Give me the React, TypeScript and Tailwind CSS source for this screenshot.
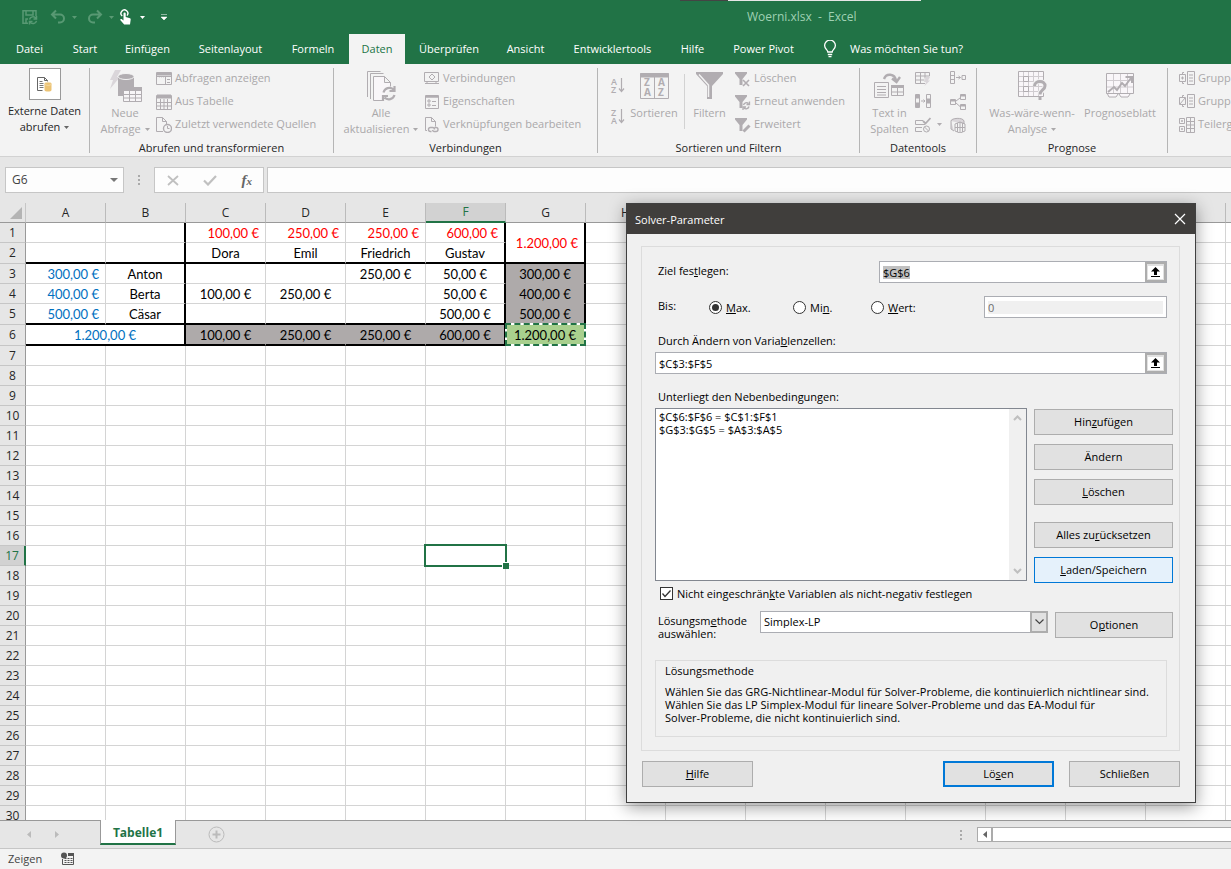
import type { ReactNode } from "react";
import clsx from "clsx";

const tabs = [
    { label: "Datei", width: "w-[59px]" },
    { label: "Start", width: "w-[52px]" },
    { label: "Einfügen", width: "w-[73px]" },
    { label: "Seitenlayout", width: "w-[93px]" },
    { label: "Formeln", width: "w-[72px]" },
    { label: "Daten", width: "w-[56px]", active: true },
    { label: "Überprüfen", width: "w-[88px]" },
    { label: "Ansicht", width: "w-[65px]" },
    { label: "Entwicklertools", width: "w-[109px]" },
    { label: "Hilfe", width: "w-[51px]" },
    { label: "Power Pivot", width: "w-[91px]" },
];

const columns = ["A", "B", "C", "D", "E", "F", "G", "H", "I", "J", "K", "L", "M", "N", "O", "P"];

type Cell = { text: string; style: string };

const red = "text-right pr-[6px] text-[#ff0000]";
const blue = "text-right pr-[6px] text-[#0070c0]";
const mid = "text-center text-black";
const gray = "text-center text-black bg-[#aeaaaa]";

const cells: Record<string, Cell> = {
    C1: { text: "100,00 €", style: red },
    D1: { text: "250,00 €", style: red },
    E1: { text: "250,00 €", style: red },
    F1: { text: "600,00 €", style: red },
    G1: { text: "1.200,00 €", style: red },
    C2: { text: "Dora", style: mid },
    D2: { text: "Emil", style: mid },
    E2: { text: "Friedrich", style: mid },
    F2: { text: "Gustav", style: mid },
    A3: { text: "300,00 €", style: blue },
    B3: { text: "Anton", style: mid },
    E3: { text: "250,00 €", style: mid },
    F3: { text: "50,00 €", style: mid },
    G3: { text: "300,00 €", style: gray },
    A4: { text: "400,00 €", style: blue },
    B4: { text: "Berta", style: mid },
    C4: { text: "100,00 €", style: mid },
    D4: { text: "250,00 €", style: mid },
    F4: { text: "50,00 €", style: mid },
    G4: { text: "400,00 €", style: gray },
    A5: { text: "500,00 €", style: blue },
    B5: { text: "Cäsar", style: mid },
    F5: { text: "500,00 €", style: mid },
    G5: { text: "500,00 €", style: gray },
    A6: { text: "1.200,00 €", style: "text-center text-[#0070c0]" },
    C6: { text: "100,00 €", style: gray },
    D6: { text: "250,00 €", style: gray },
    E6: { text: "250,00 €", style: gray },
    F6: { text: "600,00 €", style: gray },
    G6: { text: "1.200,00 €", style: "text-center text-black bg-[#a9d08e]" },
};

/* ---------- icons ---------- */

const Svg = ({ w = 16, h = 16, children, className }: { w?: number; h?: number; children: ReactNode; className?: string }) => (
    <svg width={w} height={h} viewBox={`0 0 ${w} ${h}`} fill="none" stroke="#b1adb1" className={clsx("shrink-0", className)} aria-hidden="true">
        {children}
    </svg>
);

const Caret = ({ className = "text-[#b1adb1]" }: { className?: string }) => (
    <svg width="5" height="3" viewBox="0 0 5 3" className={clsx("inline-block shrink-0", className)} aria-hidden="true">
        <path d="M0 0h5L2.5 3z" fill="currentColor" />
    </svg>
);

const SaveIcon = () => (
    <Svg className="opacity-50">
        <g stroke="#8fbfa1" strokeWidth="1.5">
            <path d="M6 14.2H1V1.8h13V7M4 2v4h7V2M4 14v-4h2" />
            <path d="M7.5 10.5a3.6 3.6 0 0 1 6.4-1.2M14.5 7v3h-3M14.5 11.8a3.6 3.6 0 0 1-6.4 1.3M7.5 15.5v-3h3" />
        </g>
    </Svg>
);

const UndoIcon = ({ flip }: { flip?: boolean }) => (
    <Svg className={clsx("opacity-50", flip && "-scale-x-100")}>
        <path d="M6 1.5 2 5.5l4 4M2.5 5.5H10a4 4 0 0 1 0 8H8" stroke="#8fbfa1" strokeWidth="2" />
    </Svg>
);

const TouchIcon = () => (
    <Svg w={14}>
        <path d="M4.2 7A3.4 3.4 0 1 1 9 6.6" stroke="#fff" strokeWidth="1.4" />
        <path d="M5.5 4.5a1.1 1.1 0 0 1 2.2 0V8l4.3 1.2c.6.2.8.6.7 1.3L12 15.6H6.2L2 10.8c.6-.9 1.4-.9 2.2-.3l1.3.9z" fill="#fff" stroke="none" />
    </Svg>
);

const BulbIcon = () => (
    <Svg w={14} h={18}>
        <path d="M4.8 12c0-2-3.2-3-3.2-6.4a5.4 5.4 0 0 1 10.8 0C12.4 9 9.2 10 9.2 12zM4.8 14.5h4.4M5.5 16.6h3" stroke="#fff" strokeWidth="1.3" />
    </Svg>
);

const ExternalIcon = () => (
    <Svg w={15} h={15}>
        <path d="M5.5 13.5h-5V.5h7l3 3v1M7.5.5v3h3" stroke="#666" />
        <path d="M2.5 4.5h3M2.5 6.5h4M2.5 8.5h4M2.5 10.5h4" stroke="#777" />
        <path d="M7.5 7v6c0 2 7 2 7 0V7z" fill="#ecc374" stroke="none" />
        <ellipse cx="11" cy="6.8" rx="3.5" ry="1.6" fill="#ecc374" stroke="#f7e4bc" strokeWidth=".6" />
    </Svg>
);

const NewQueryIcon = () => (
    <Svg w={33} h={34}>
        <path d="M6 1h6L8 8h3L1 20l3-9H1z" fill="#dad6da" stroke="none" />
        <path d="M9 8v19h6V18h10V8z" fill="#b1adb1" stroke="none" />
        <ellipse cx="17" cy="7.5" rx="8" ry="3" fill="#b1adb1" stroke="#f3f3f3" />
        <path d="M14.5 18.5h18v14h-18z" fill="#f7f5f7" />
        <path d="M14 18h19v4H14z" fill="#b1adb1" stroke="none" />
        <path d="M20.5 22v10M26.5 22v10M15 25.5h17M15 29h17" />
    </Svg>
);

const ShowQueriesIcon = () => (
    <Svg>
        <path d="M.5 1.5h15v12H.5zM9.5 6v8M11 8.5h3M11 11.5h3M1 5.5h14" />
        <path d="M1 3h14" strokeWidth="3" />
        <path d="M3 5.8h8" strokeDasharray="1 1" />
    </Svg>
);

const TableIcon = () => (
    <Svg>
        <path d="M.5 1.5h15v14H.5zM4.5 5v10M8 5v10M11.5 5v10M1 8.5h14M1 12h14" />
        <path d="M1 2.5h14" strokeWidth="4" />
    </Svg>
);

const RecentIcon = () => (
    <Svg>
        <path d="M7 14.5H.5V.5h6l4 4v3M6.5.5v4h4" />
        <circle cx="11.5" cy="11.5" r="4" strokeWidth="1.4" />
        <path d="M11.5 9v2.5h2" />
    </Svg>
);

const RefreshAllIcon = () => (
    <Svg w={31} h={31}>
        <path d="M1.5 26V.5h13M4.5 28V2.5h13" />
        <path d="M16 29.5H7.5V5.5h11l6 6v4M18.5 5.5v6h6" fill="#f9f6f9" />
        <path d="M17.5 21.500a6 6 0 0 1 10-3M28.500 15v5h-5M28.500 24a6 6 0 0 1-10 2.500M17 30v-5h5" strokeWidth="2.2" />
    </Svg>
);

const ConnectionIcon = () => (
    <Svg>
        <path d="M.5 1.5h14v9H.5zM1 12.5h14M3 10v2M12 10v2" />
        <path d="m8 3 3 3-3 3-3-3z" />
    </Svg>
);

const PropertiesIcon = () => (
    <Svg>
        <path d="M1.5 1.5h13v13h-13z" />
        <path d="M2 2.5h12" strokeWidth="2.5" />
        <path d="M4 6h2v2H4zM4 10h2v2H4zM8 7.500h4M8 11.500h4" />
    </Svg>
);

const LinksIcon = () => (
    <Svg>
        <path d="M3 13.5H1.5V.5h6l4 4v5M7.5.5v4h4" />
        <path d="M7.5 14.5h-1a2 2 0 0 1 0-4h2a2 2 0 0 1 2 2M10.5 10.5H12a2 2 0 0 1 0 4h-2a2 2 0 0 1-1.5-1.5" strokeWidth="1.4" />
    </Svg>
);

const SortIcon = ({ a, z }: { a: string; z: string }) => (
    <Svg w={15} h={18}>
        <g fill="#b1adb1" stroke="none" fontFamily="Open Sans, sans-serif" fontSize="9" fontWeight="600">
            <text x="1" y="8">{a}</text>
            <text x="1" y="16">{z}</text>
        </g>
        <path d="M11.5 1v13M9 11.5l2.500 3 2.500-3" strokeWidth="1.2" />
    </Svg>
);

const SortDialogIcon = () => (
    <Svg w={29} h={26}>
        <path d="M.5.5h28v25H.5zM14.5 4v21" />
        <path d="M0 2.5h29" strokeWidth="4" />
        <g fill="#b1adb1" stroke="none" fontFamily="Open Sans, sans-serif" fontSize="10" fontWeight="700">
            <text x="4" y="13">Z</text>
            <text x="4" y="23">A</text>
            <text x="18" y="13">A</text>
            <text x="18" y="23">Z</text>
        </g>
    </Svg>
);

const FilterIcon = () => (
    <Svg w={27} h={28}>
        <path d="M0 0h27v2L16 14v13h-5V14L0 2z" fill="#b1adb1" stroke="none" />
        <path d="m3 2.5 9.5 10.5v12" stroke="#f3f3f3" strokeWidth="1.5" />
    </Svg>
);

const SmallFilter = ({ children }: { children: ReactNode }) => (
    <Svg>
        <path d="M0 1h12v1.5L7.5 8v6h-3V8L0 2.5z" fill="#b1adb1" stroke="none" />
        {children}
    </Svg>
);

const TextColumnsIcon = () => (
    <Svg w={31} h={26}>
        <path d="M.5 9.5h14v15H.5zM3 13.5h9M3 16.5h9M3 19.5h9M3 22h9" />
        <path d="M10 6c2-6 11-6 12 2M18 5.5 22.5 9 26 4" strokeWidth="2.4" />
        <path d="M17.5 12.5h12v10h-12zM23.5 13v9M18 19h11" />
        <path d="M17 13.5h13" strokeWidth="3" />
    </Svg>
);

const FlashFillIcon = () => (
    <Svg>
        <path d="M10 12.5H.5v-11h14V5M.5 5h14M.5 9h9M5.5 1.5v11M10 1.5v6" />
        <path d="M11 6h4l-2 3.500h2L9.500 15l1.500-4H9z" fill="#dad6da" stroke="none" />
    </Svg>
);

const DuplicatesIcon = () => (
    <Svg>
        <path d="M.5.5h4v13h-4zM11.5.5h4v13h-4z" />
        <path d="M1 1h3v3H1zM1 9h3v4H1zM12 5h3v4h-3z" fill="#b1adb1" />
        <path d="M6 7h4M8.500 5.500 10 7 8.500 8.500" />
    </Svg>
);

const ValidationIcon = () => (
    <Svg>
        <path d="M8 3.5H.5v4H10M7 10.5H.5v4H7" />
        <path d="m8 4 2.500 2.500L15.500 1" strokeWidth="1.8" />
        <circle cx="11.5" cy="12" r="3" />
        <path d="m9.5 10 4 4" />
    </Svg>
);

const ConsolidateIcon = () => (
    <Svg>
        <path d="M.5.5h4v12h-4zM.5 4.5h4M.5 8.5h4M12 4.500h3.500v4H12zM6 6.500h4.500M8.500 5l2 1.500-2 1.500" />
    </Svg>
);

const RelationIcon = () => (
    <Svg>
        <path d="M.5 5.500h5v5h-5zM10.500.500h5v5h-5zM10.500 10.500h5v5h-5zM6 7l4-3M6 9l4 3.500" />
        <path d="M11 1.500h4M11 11.500h4M1 6.500h4" strokeWidth="2" />
    </Svg>
);

const DataModelIcon = () => (
    <Svg>
        <path d="M1 4c0-3 12-4 13 0v3M1 4v8l3 2" fill="#dad6da" />
        <path d="m5 7 5-2 5 2v7l-5 2-5-2zM10 5v11M5 10.500h10M7.500 6v9M12.500 6v9" />
    </Svg>
);

const WhatIfIcon = () => (
    <Svg w={29} h={30}>
        <path d="M.5.5h25v25H.5z" fill="#f9f6f9" />
        <path d="M5.5 1v24M10.5 1v24M15.5 1v24M20.5 1v24M1 5.5h24M1 10.5h24M1 15.5h24M1 20.5h24" stroke="#d0ccd0" />
        <path d="M5.5 5.5h5v5h-5zM5.5 15.5h5v5h-5z" />
        <path d="M16.5 15c0-6 11-6 10.5 0 0 4-5 4-5 8.5" stroke="#f3f3f3" strokeWidth="5" />
        <path d="M16.5 15c0-6 11-6 10.5 0 0 4-5 4-5 8.5M22 26v3" strokeWidth="3" />
    </Svg>
);

const ForecastIcon = () => (
    <Svg w={29} h={26}>
        <path d="M.5.5h27v20H.5zM1 20l2 4h7l2-3M13 21l2 3h7l2-3" fill="#f9f6f9" />
        <path d="M7.5 1v19M14.5 1v19M21.5 1v19M1 7.5h26M1 14h26" stroke="#d0ccd0" />
        <path d="m2 19 6-5 3 3 5-7 3 3 6-8M19.500 4H26v6" strokeWidth="2" />
    </Svg>
);

const OutlineIcon = ({ sign }: { sign: string }) => (
    <Svg>
        <path d="M5 1.5H3.5v2M3.5 11v1.5H5M.5 3.5h6v7h-6zM8.5.5h7v13h-7zM10 4h4M10 7h4M10 10h4" />
        <path d={sign} />
    </Svg>
);

const SubtotalIcon = () => (
    <Svg>
        <path d="M.5 1.5h5v5h-5zM.5 9.5h5v5h-5zM2 4h2M3 3v2M2 12h2M3 11v2M7.5.5h8v15h-8zM11.5 1v14M8 4.5h7M8 8h7M8 11.5h7" />
    </Svg>
);

const RecordMacroIcon = () => (
    <Svg w={14} h={14}>
        <circle cx="3" cy="3.5" r="3" fill="#555" stroke="none" />
        <path d="M1.5 7v5.5h11v-11H7" stroke="#555" />
        <path d="M7 2.5h6" stroke="#555" strokeWidth="3" />
        <path d="M3.5 6.5h8M3.5 8.5h8M3.5 10.5h8" stroke="#555" strokeDasharray="2 1" />
    </Svg>
);

/* ---------- ribbon ---------- */

const Group = ({ label, width, children }: { label: string; width: string; children: ReactNode }) => (
    <section aria-label={label} className={clsx("flex shrink-0", width)}>
        <div className="flex min-w-0 flex-1 flex-col">
            <div className="flex flex-1 pt-[3px]">{children}</div>
            <p className="h-4 text-center leading-4 text-[#262626]">{label}</p>
        </div>
        <div className="mt-1 h-[85px] w-px bg-[#b5b5b5]" />
    </section>
);

const BigButton = ({ icon, lines, caret, width, className }: { icon: ReactNode; lines: string[]; caret?: boolean; width: string; className?: string }) => (
    <button className={clsx("flex shrink-0 flex-col items-center leading-4 whitespace-nowrap text-[#aaa8aa]", width, className)}>
        <span className="flex h-[38px] items-center justify-center">{icon}</span>
        {lines.map((line, i) => (
            <span key={line} className="flex items-center gap-1">
                {line}
                {caret && i === lines.length - 1 && <Caret className="text-current" />}
            </span>
        ))}
    </button>
);

const SmallButton = ({ icon, text, label }: { icon: ReactNode; text?: string; label?: string }) => (
    <button aria-label={label} className="flex h-[23px] items-center gap-[3px] whitespace-nowrap text-[#aaa8aa]">
        {icon}
        {text}
    </button>
);

const Ribbon = () => (
    <div className="flex h-[93px] shrink-0 overflow-hidden border-b border-[#d2d2d2] bg-[#f3f3f3] text-[11px]">
        <section className="flex w-[90px] shrink-0">
            <button className="flex flex-1 flex-col items-center pt-1 leading-4 whitespace-nowrap text-[#262626]">
                <span className="mb-[3px] flex h-8 w-8 items-center justify-center border border-[#999] bg-white">
                    <ExternalIcon />
                </span>
                <span>Externe Daten</span>
                <span className="flex items-center gap-1">
                    abrufen <Caret className="text-[#666]" />
                </span>
            </button>
            <div className="mt-1 h-[85px] w-px bg-[#b5b5b5]" />
        </section>

        <Group label="Abrufen und transformieren" width="w-[244px]">
            <BigButton icon={<NewQueryIcon />} lines={["Neue", "Abfrage"]} caret width="w-[66px]" className="pl-1" />
            <div>
                <SmallButton icon={<ShowQueriesIcon />} text="Abfragen anzeigen" />
                <SmallButton icon={<TableIcon />} text="Aus Tabelle" />
                <SmallButton icon={<RecentIcon />} text="Zuletzt verwendete Quellen" />
            </div>
        </Group>

        <Group label="Verbindungen" width="w-[264px]">
            <BigButton icon={<RefreshAllIcon />} lines={["Alle", "aktualisieren"]} caret width="w-[90px]" className="pl-1" />
            <div>
                <SmallButton icon={<ConnectionIcon />} text="Verbindungen" />
                <SmallButton icon={<PropertiesIcon />} text="Eigenschaften" />
                <SmallButton icon={<LinksIcon />} text="Verknüpfungen bearbeiten" />
            </div>
        </Group>

        <Group label="Sortieren und Filtern" width="w-[262px]">
            <div className="flex w-8 flex-col items-center gap-[13px] pt-[10px] pl-[6px]">
                <button aria-label="Von A bis Z sortieren"><SortIcon a="A" z="Z" /></button>
                <button aria-label="Von Z bis A sortieren"><SortIcon a="Z" z="A" /></button>
            </div>
            <BigButton icon={<SortDialogIcon />} lines={["Sortieren"]} width="w-[48px]" />
            <div className="mt-[7px] ml-[6px] h-[55px] w-px bg-[#d2d2d2]" />
            <BigButton icon={<FilterIcon />} lines={["Filtern"]} width="w-[49px]" />
            <div className="pl-px">
                <SmallButton icon={<SmallFilter><path d="m8 9 6 6M14 9l-6 6" strokeWidth="1.6" /></SmallFilter>} text="Löschen" />
                <SmallButton icon={<SmallFilter><path d="M8.5 11a3 3 0 0 1 5-1.5M14.5 7.5v3h-3M14 12.500a3 3 0 0 1-5 1.500M8 16v-3h3" strokeWidth="1.3" /></SmallFilter>} text="Erneut anwenden" />
                <SmallButton icon={<SmallFilter><path d="m8.5 14.5 6-6" strokeWidth="3" /></SmallFilter>} text="Erweitert" />
            </div>
        </Group>

        <Group label="Datentools" width="w-[117px]">
            <BigButton icon={<TextColumnsIcon />} lines={["Text in", "Spalten"]} width="w-[55px]" className="pl-1" />
            <div className="w-[35px]">
                <SmallButton icon={<FlashFillIcon />} label="Blitzvorschau" />
                <SmallButton icon={<DuplicatesIcon />} label="Duplikate entfernen" />
                <button className="flex h-[23px] items-center gap-[6px]" aria-label="Datenüberprüfung"><ValidationIcon /><Caret /></button>
            </div>
            <div>
                <SmallButton icon={<ConsolidateIcon />} label="Konsolidieren" />
                <SmallButton icon={<RelationIcon />} label="Beziehungen" />
                <SmallButton icon={<DataModelIcon />} label="Datenmodell verwalten" />
            </div>
        </Group>

        <Group label="Prognose" width="w-[191px]">
            <BigButton icon={<WhatIfIcon />} lines={["Was-wäre-wenn-", "Analyse"]} caret width="w-[100px]" className="pl-[10px]" />
            <BigButton icon={<ForecastIcon />} lines={["Prognoseblatt"]} width="w-[86px]" />
        </Group>

        <section className="pt-[3px] pl-[11px]">
            <SmallButton icon={<OutlineIcon sign="M2 7h3M3.5 5.5v3" />} text="Gruppieren" />
            <SmallButton icon={<OutlineIcon sign="m1 10 5-6" />} text="Gruppierung aufheben" />
            <SmallButton icon={<SubtotalIcon />} text="Teilergebnis" />
        </section>
    </div>
);

/* ---------- sheet ---------- */

const rowHeight = (row: number) => (row === 2 || row === 5 || row === 6 ? "h-[21px]" : "h-5");

const SheetCell = ({ col, row }: { col: string; row: number }) => {
    const id = col + row;
    if (id === "B6" || id === "G2") return null;
    const cell = cells[id];
    const inBlock = row <= 6 && "ABCDEFG".includes(col);
    const thickRight = (inBlock && "BFG".includes(col)) || id === "A6";
    const thickBottom = (inBlock && (row === 2 || row === 5 || row === 6)) || id === "G1";
    const grayBlock = col === "G" && (row === 3 || row === 4);
    return (
        <td
            colSpan={id === "A6" ? 2 : 1}
            rowSpan={id === "G1" ? 2 : 1}
            className={clsx(
                "relative p-0 leading-[18px] whitespace-nowrap",
                thickRight ? "border-r-2 border-r-black" : row === 6 && inBlock ? "border-r border-r-[#aeaaaa]" : "border-r border-r-[#d4d4d4]",
                thickBottom ? "border-b-2 border-b-black" : grayBlock ? "border-b border-b-[#aeaaaa]" : "border-b border-b-[#d4d4d4]",
                cell?.style
            )}
        >
            {cell?.text}
            {id === "G6" && (
                <span className="absolute -inset-[2px] -left-[1px] border-2 border-white">
                    <span className="absolute -inset-[2px] border-2 border-dashed border-[#217346]" />
                </span>
            )}
            {id === "F17" && (
                <span className="absolute -inset-[2px] z-10 border-2 border-[#217346]">
                    <span className="absolute -right-1 -bottom-1 size-[7px] border-t border-l border-white bg-[#217346]" />
                </span>
            )}
        </td>
    );
};

const Sheet = () => (
    <div className="min-h-0 flex-1 overflow-hidden bg-white">
        <table className="w-[1306px] table-fixed border-separate border-spacing-0 font-['Lato',sans-serif] text-[13px]">
            <thead>
                <tr className="h-5 bg-[#e6e6e6] font-['Open_Sans',sans-serif] text-xs">
                    <th className="w-[26px] border-r border-b border-[#c6c6c6] border-b-[#999] p-0" aria-label="Alles auswählen">
                        <svg width="12" height="12" className="mr-[3px] ml-auto" aria-hidden="true">
                            <path d="M12 0v12H0z" fill="#b4b4b4" />
                        </svg>
                    </th>
                    {columns.map((col) => (
                        <th
                            key={col}
                            className={clsx(
                                "w-20 border-r border-r-[#bbb] p-0 leading-[18px] font-normal",
                                col === "F" ? "border-b-2 border-b-[#217346] bg-[#d2d2d2] text-[#217346]" : "border-b border-b-[#999] text-[#262626]"
                            )}
                        >
                            {col}
                        </th>
                    ))}
                </tr>
            </thead>
            <tbody>
                {Array.from({ length: 30 }, (_, i) => i + 1).map((row) => (
                    <tr key={row} className={rowHeight(row)}>
                        <th
                            className={clsx(
                                "border-r border-b border-b-[#c6c6c6] p-0 font-['Open_Sans',sans-serif] text-xs leading-[18px] font-normal",
                                row === 17 ? "border-r-2 border-r-[#217346] bg-[#d2d2d2] text-[#217346]" : "border-r-[#999] bg-[#e6e6e6] text-[#262626]"
                            )}
                        >
                            {row}
                        </th>
                        {columns.map((col) => (
                            <SheetCell key={col} col={col} row={row} />
                        ))}
                    </tr>
                ))}
            </tbody>
        </table>
    </div>
);

/* ---------- solver dialog ---------- */

const DialogButton = ({ children, className }: { children: ReactNode; className?: string }) => (
    <button className={clsx("h-[26px] shrink-0 pb-[2px] text-center", className ?? "border border-[#adadad] bg-[#e1e1e1]")}>{children}</button>
);

const RefInput = ({ id, value, className, selected }: { id: string; value: string; className?: string; selected?: boolean }) => (
    <div className={clsx("flex h-[22px] border border-[#abadb3] bg-white", className)}>
        <div className="flex min-w-0 flex-1 items-center pl-[3px]">
            <input id={id} defaultValue={value} className={clsx("h-[13px] outline-none", selected ? "w-[27px] bg-[#c0c0c0]" : "w-full")} />
        </div>
        <button className="flex w-[21px] items-center justify-center border-2 border-[#adadad] bg-[#e1e1e1]" aria-label="Bereich auswählen">
            <svg width="15" height="13" viewBox="0 0 15 13" className="shrink-0" aria-hidden="true">
                <path d="M0 0h15v13H0z" fill="#fff" />
                <path d="M7.5 1 12 5.5H9V9H6V5.5H3zM3 10h9v1H3z" fill="#000" />
            </svg>
        </button>
    </div>
);

const Radio = ({ id, children, checked, className }: { id: string; children: ReactNode; checked?: boolean; className: string }) => (
    <div className={clsx("flex items-center gap-1", className)}>
        <input
            id={id}
            type="radio"
            name="target"
            defaultChecked={checked}
            className="grid size-[13px] shrink-0 appearance-none place-content-center rounded-full border border-[#333] bg-white checked:before:size-[7px] checked:before:rounded-full checked:before:bg-[#333]"
        />
        <label htmlFor={id}>{children}</label>
    </div>
);

const SolverDialog = () => (
    <div
        role="dialog"
        aria-label="Solver-Parameter"
        className="absolute top-[203px] left-[626px] z-20 w-[570px] border border-[#404040] bg-[#f0f0f0] text-[11px] leading-[13px] text-black shadow-[0_4px_16px_rgba(0,0,0,0.4)]"
    >
        <div className="flex h-[30px] items-center justify-between bg-[#403e3c] pr-[9px] pl-2 text-white">
            <h1>Solver-Parameter</h1>
            <button aria-label="Schließen">
                <svg width="12" height="12" viewBox="0 0 12 12" stroke="#fff" strokeWidth="1.2" aria-hidden="true">
                    <path d="m1 1 10 10M11 1 1 11" />
                </svg>
            </button>
        </div>

        <div className="pt-3 pr-[15px] pb-[15px] pl-[14px]">
            <div className="border border-[#dcdcdc] pt-[14px] pr-3 pb-[13px] pl-[13px]">
                <div className="flex items-center">
                    <label htmlFor="goal" className="w-[224px] pb-[3px] pl-[3px]">Ziel fes<u>t</u>legen:</label>
                    <RefInput id="goal" value="$G$6" selected className="flex-1" />
                </div>

                <div className="mt-[13px] flex items-center">
                    <span className="w-[54px] pb-[3px] pl-[3px]">Bis:</span>
                    <Radio id="max" checked className="w-[84px]"><u>M</u>ax.</Radio>
                    <Radio id="min" className="w-[78px]">Mi<u>n</u>.</Radio>
                    <Radio id="wert" className="w-[113px]"><u>W</u>ert:</Radio>
                    <div className="flex h-[22px] flex-1 items-center border border-[#abadb3] bg-white px-[3px]">
                        <input aria-label="Wert" defaultValue="0" disabled className="h-[13px] w-full bg-[#f0f0f0] text-[#6d6d6d]" />
                    </div>
                </div>

                <label htmlFor="vars" className="mt-4 block pl-[3px]">Durch Ändern von Varia<u>b</u>lenzellen:</label>
                <RefInput id="vars" value="$C$3:$F$5" className="mt-[5px]" />

                <p className="mt-4 pl-[3px]">Unterliegt den Nebenbedin<u>g</u>ungen:</p>
                <div className="-mr-[6px] mt-[5px] flex justify-between">
                    <div className="flex h-[173px] w-[372px] border border-[#828790] bg-white">
                        <ul role="listbox" aria-label="Nebenbedingungen" className="flex-1 pt-px pl-[3px]">
                            <li role="option">$C$6:$F$6 = $C$1:$F$1</li>
                            <li role="option">$G$3:$G$5 = $A$3:$A$5</li>
                        </ul>
                        <div className="flex w-[17px] flex-col items-center justify-between bg-[#f0f0f0] py-[6px]">
                            <svg width="9" height="6" fill="none" stroke="#bfbfbf" strokeWidth="2" aria-hidden="true"><path d="M1 5l3.500-3.500L8 5" /></svg>
                            <svg width="9" height="6" fill="none" stroke="#bfbfbf" strokeWidth="2" aria-hidden="true"><path d="M1 1l3.500 3.500L8 1" /></svg>
                        </div>
                    </div>
                    <div className="flex w-[139px] flex-col gap-[9px] pt-px">
                        <DialogButton>Hin<u>z</u>ufügen</DialogButton>
                        <DialogButton>Ändern</DialogButton>
                        <DialogButton><u>L</u>öschen</DialogButton>
                        <div className="mt-2 flex flex-col gap-[9px]">
                            <DialogButton>Alles zu<u>r</u>ücksetzen</DialogButton>
                            <DialogButton className="border border-[#0078d7] bg-[#e5f1fb]"><u>L</u>aden/Speichern</DialogButton>
                        </div>
                    </div>
                </div>

                <div className="mt-1 flex items-center gap-1 pl-[5px]">
                    <span className="relative size-[13px]">
                        <input id="nonneg" type="checkbox" defaultChecked className="block size-[13px] appearance-none border border-[#333] bg-white" />
                        <svg width="13" height="13" fill="none" stroke="#333" strokeWidth="1.3" className="pointer-events-none absolute inset-0" aria-hidden="true">
                            <path d="m2.5 6.5 2.500 3 5.500-6" />
                        </svg>
                    </span>
                    <label htmlFor="nonneg">Nicht eingeschrän<u>k</u>te Variablen als nicht-negativ festlegen</label>
                </div>

                <div className="mt-[11px] -mr-[6px] flex items-start">
                    <label htmlFor="method" className="w-[105px] pt-[3px] pl-[3px]">Lösungsm<u>e</u>thode auswählen:</label>
                    <div className="relative mr-[7px] flex-1">
                        <select id="method" className="block h-[22px] w-full appearance-none border border-[#abadb3] bg-white pb-px pl-[3px]">
                            <option>Simplex-LP</option>
                        </select>
                        <span className="pointer-events-none absolute top-0 right-0 flex h-[22px] w-[18px] items-center justify-center border-2 border-[#adadad] bg-[#e1e1e1]">
                            <svg width="9" height="6" fill="none" stroke="#444" strokeWidth="1.2" aria-hidden="true"><path d="m.5.5 4 4 4-4" /></svg>
                        </span>
                    </div>
                    <DialogButton className="mt-px w-[118px] border border-[#adadad] bg-[#e1e1e1]">O<u>p</u>tionen</DialogButton>
                </div>

                <div className="mt-5 h-[77px] border border-[#dcdcdc] pt-[3px] pl-[9px]">
                    <h2>Lösungsmethode</h2>
                    <p className="mt-2 whitespace-nowrap">
                        Wählen Sie das GRG-Nichtlinear-Modul für Solver-Probleme, die kontinuierlich nichtlinear sind.<br />
                        Wählen Sie das LP Simplex-Modul für lineare Solver-Probleme und das EA-Modul für<br />
                        Solver-Probleme, die nicht kontinuierlich sind.
                    </p>
                </div>
            </div>

            <div className="mt-[10px] flex pl-px">
                <DialogButton className="mr-auto w-[111px] border border-[#adadad] bg-[#e1e1e1]"><u>H</u>ilfe</DialogButton>
                <DialogButton className="mr-[15px] w-[111px] border-2 border-[#0078d7] bg-[#e1e1e1]">Lö<u>s</u>en</DialogButton>
                <DialogButton className="w-[111px] border border-[#adadad] bg-[#e1e1e1]">Schließen</DialogButton>
            </div>
        </div>
    </div>
);

const App = () => {
    return (
        <div className="relative flex h-screen w-full flex-col overflow-hidden bg-[#e6e6e6] font-['Open_Sans',sans-serif] text-xs">
            {/* Title bar */}
            <header className="relative flex h-[34px] shrink-0 items-center bg-[#217346] pl-[22px]">
                <div className="absolute top-0 left-[680px] flex h-px w-[241px] bg-[#e6e6e6]">
                    <div className="w-12 bg-[#444]" />
                </div>
                <button aria-label="Speichern"><SaveIcon /></button>
                <button className="ml-3 flex items-center gap-[6px]" aria-label="Rückgängig"><UndoIcon /><Caret className="text-[#5a9a74]" /></button>
                <button className="ml-[10px] flex items-center gap-[6px]" aria-label="Wiederholen"><UndoIcon flip /><Caret className="text-[#5a9a74]" /></button>
                <button className="ml-1 flex items-center gap-2" aria-label="Touchmodus"><TouchIcon /><Caret className="text-white" /></button>
                <button className="ml-4" aria-label="Symbolleiste anpassen">
                    <svg width="6" height="7" aria-hidden="true"><path d="M0 .5h6M0 3h6L3 6z" fill="#fff" stroke="#fff" strokeWidth=".5" /></svg>
                </button>
                <p className="ml-auto w-[484px] whitespace-pre text-[#9fd1b3]">Woerni.xlsx  -  Excel</p>
            </header>

            {/* Tabs */}
            <nav className="flex h-[30px] shrink-0 bg-[#217346] text-[11px] text-white">
                {tabs.map((tab) => (
                    <button key={tab.label} className={clsx("shrink-0 whitespace-nowrap", tab.width, tab.active && "bg-[#f3f3f3] text-[#217346]")}>
                        {tab.label}
                    </button>
                ))}
                <button className="ml-[14px] flex items-center gap-[13px] whitespace-nowrap">
                    <BulbIcon />
                    Was möchten Sie tun?
                </button>
            </nav>

            <Ribbon />

            {/* Formula bar */}
            <div className="flex h-[46px] shrink-0 pt-[10px] pl-[5px]">
                <div className="flex h-[26px] w-[119px] items-center border border-[#c6c6c6] bg-[#fdfdfd] pr-[5px] pl-[6px]">
                    <input aria-label="Namenfeld" defaultValue="G6" className="min-w-0 flex-1 text-[#444] outline-none" />
                    <svg width="8" height="4" aria-hidden="true"><path d="M0 0h8L4 4z" fill="#777" /></svg>
                </div>
                <div className="flex h-[26px] w-[30px] flex-col items-center justify-center gap-[2px]">
                    <i className="size-[2px] bg-[#aaa]" />
                    <i className="size-[2px] bg-[#aaa]" />
                    <i className="size-[2px] bg-[#aaa]" />
                </div>
                <div className="flex h-[26px] w-[110px] items-center justify-between border border-[#c6c6c6] bg-[#fdfdfd] pr-[11px] pl-3">
                    <button aria-label="Abbrechen">
                        <svg width="12" height="11" stroke="#c0c0c0" strokeWidth="1.8" aria-hidden="true"><path d="m1 1 10 9M11 1 1 10" /></svg>
                    </button>
                    <button aria-label="Eingeben">
                        <svg width="14" height="11" fill="none" stroke="#c0c0c0" strokeWidth="2.2" aria-hidden="true"><path d="m1 5.5 4 4L13 1" /></svg>
                    </button>
                    <button className="font-['Liberation_Serif',serif] text-[15px] leading-4 font-bold text-[#666] italic" aria-label="Funktion einfügen">
                        f<span className="text-[11px]">x</span>
                    </button>
                </div>
                <input aria-label="Bearbeitungsleiste" className="ml-[3px] h-[26px] min-w-0 flex-1 border border-r-0 border-[#c6c6c6] bg-[#fdfdfd] outline-none" />
            </div>

            <Sheet />

            {/* Sheet tabs */}
            <div className="flex h-7 shrink-0 border-t border-[#999]">
                <div className="flex w-[100px] items-center gap-6 pl-[27px]">
                    <svg width="4" height="7" aria-hidden="true"><path d="M4 0v7L0 3.5z" fill="#bbb" /></svg>
                    <svg width="4" height="7" aria-hidden="true"><path d="M0 0v7l4-3.5z" fill="#bbb" /></svg>
                </div>
                <button className="z-10 -mt-px h-[25px] w-[76px] border-x border-b-2 border-x-[#999] border-b-[#217346] bg-white pt-[2px] text-xs font-bold text-[#217346]">Tabelle1</button>
                <button className="ml-8 flex items-center" aria-label="Neues Blatt">
                    <svg width="17" height="17" fill="none" stroke="#bbb" aria-hidden="true"><circle cx="8.5" cy="8.5" r="7.5" /><path d="M8.5 4.5v8M4.5 8.5h8" strokeWidth="2" /></svg>
                </button>
                <div className="ml-auto flex w-[271px] items-center">
                    <div className="flex w-[17px] flex-col gap-[2px]">
                        <i className="size-[2px] bg-[#aaa]" />
                        <i className="size-[2px] bg-[#aaa]" />
                        <i className="size-[2px] bg-[#aaa]" />
                    </div>
                    <button className="flex h-[15px] w-[15px] items-center justify-center border border-[#ababab] bg-white" aria-label="Nach links">
                        <svg width="4" height="7" aria-hidden="true"><path d="M4 0v7L0 3.5z" fill="#666" /></svg>
                    </button>
                    <div className="h-[15px] flex-1 border-y border-l border-[#ababab] bg-white" />
                </div>
            </div>

            {/* Status bar */}
            <footer className="flex h-[21px] shrink-0 items-center gap-[19px] border-t border-[#c6c6c6] bg-[#f3f3f3] pl-2 text-[#444]">
                <span className="text-[11px]">Zeigen</span>
                <RecordMacroIcon />
            </footer>

            <SolverDialog />
        </div>
    );
};

export default App;
